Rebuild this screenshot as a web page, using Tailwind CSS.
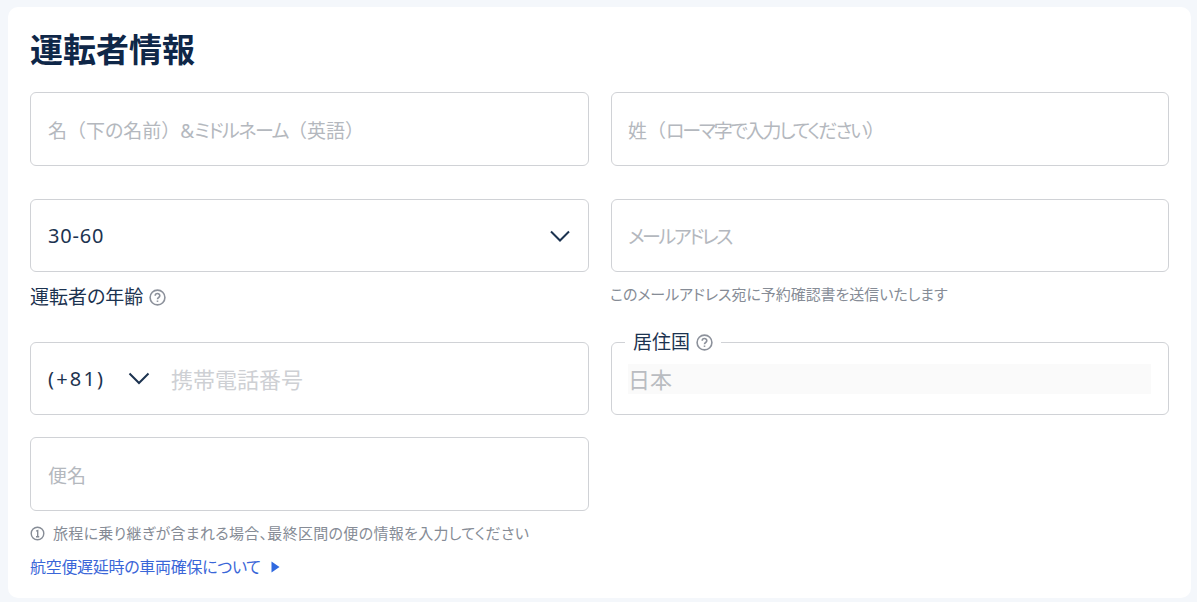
<!DOCTYPE html>
<html lang="ja">
<head>
    <meta charset="UTF-8">
    <title>運転者情報</title>
    <script src="https://cdn.jsdelivr.net/npm/@tailwindcss/browser@4"></script>
</head>
<body class="bg-[#f4f7fb] h-[602px] overflow-hidden font-['Noto_Sans','Noto_Sans_CJK_JP',sans-serif] [font-feature-settings:'palt']">
    <div class="mx-[8px] mt-[7px] mr-[6px] h-[591px] bg-white rounded-[10px] pl-[22px] pr-[22px]">
        <h1 class="h-[85px] pt-[20px] text-[33px] leading-[46px] font-bold text-[#0f2748]">運転者情報</h1>

        <!-- row 1 -->
        <div class="grid grid-cols-[559px_558px] gap-x-[22px]">
            <div class="h-[74px] border border-[#d0d2d6] rounded-[6px] flex items-center px-[17px] pt-[4px] text-[19px] text-[#b4b8be]">
                <span class="whitespace-pre"><span class="[font-feature-settings:normal]">名（</span>下の名前<span class="[font-feature-settings:normal]">）</span>&amp;<span class="tracking-[-1.5px]">ミドルネーム</span><span class="[font-feature-settings:normal]">（</span>英語<span class="[font-feature-settings:normal]">）</span></span>
            </div>
            <div class="h-[74px] border border-[#d0d2d6] rounded-[6px] flex items-center px-[16px] pt-[4px] text-[19px] text-[#b4b8be]">
                <span class="whitespace-pre"><span class="[font-feature-settings:normal]">姓（</span><span class="tracking-[-2.2px]">ローマ字で入力してください</span><span class="[font-feature-settings:normal]">）</span></span>
            </div>
        </div>

        <!-- row 2 -->
        <div class="grid grid-cols-[559px_558px] gap-x-[22px] mt-[33px]">
            <div>
                <div class="h-[73px] border border-[#d0d2d6] rounded-[6px] flex items-center justify-between pl-[17px] pr-[18px] text-[20px] tracking-[0.8px] text-[#1c3350]">
                    <span>30-60</span>
                    <svg width="20" height="12" viewBox="0 0 20 12" fill="none" stroke="#1c3350" stroke-width="2"><path d="M1 1.5l9 9 9-9"/></svg>
                </div>
                <div class="flex items-center gap-[6px] mt-[12px] h-[26px] text-[19px] text-[#1c3350]">
                    <span>運転者の年齢</span>
                    <svg width="17" height="17" viewBox="0 0 17 17" fill="none" stroke="#8c919b" stroke-width="1.6"><circle cx="8.5" cy="8.5" r="7.4"/><path d="M6.2 6.8c0-3 4.6-3 4.6-.1 0 1.800-2.300 1.800-2.300 3.500"/><path d="M8.500 11.500v1.400"/></svg>
                </div>
            </div>
            <div>
                <div class="h-[73px] border border-[#d0d2d6] rounded-[6px] flex items-center px-[16px] pt-[4px] text-[19px] tracking-[-2.4px] text-[#b4b8be]">メールアドレス</div>
                <div class="mt-[11px] -ml-[1px] h-[22px] leading-[22px] text-[15px] tracking-[-0.05px] text-[#868c96]">このメールアドレス宛に予約確認書を送信いたします</div>
            </div>
        </div>

        <!-- row 3 -->
        <div class="grid grid-cols-[559px_558px] gap-x-[22px] mt-[32px]">
            <div class="h-[73px] border border-[#d0d2d6] rounded-[6px] flex items-center pl-[17px] text-[20px]">
                <span class="text-[#1c3350] w-[80px] pt-[1px] tracking-[2.2px]">(+81)</span>
                <svg width="22" height="13" viewBox="0 0 22 13" fill="none" stroke="#1c3350" stroke-width="2"><path d="M1.500 1.500l9.500 9.500 9.500-9.500"/></svg>
                <span class="ml-[21px] pt-[2px] text-[22px] text-[#ced0d4]">携帯電話番号</span>
            </div>
            <div class="relative h-[73px] border border-[#d0d2d6] rounded-[6px] flex items-center pl-[16px] pr-[17px]">
                <div class="absolute left-[13px] -top-[13px] bg-white px-[8px] flex items-center gap-[6px] h-[24px] text-[19px] text-[#1c3350]">
                    <span>居住国</span>
                    <svg width="17" height="17" viewBox="0 0 17 17" fill="none" stroke="#8c919b" stroke-width="1.6"><circle cx="8.5" cy="8.5" r="7.4"/><path d="M6.2 6.8c0-3 4.6-3 4.6-.1 0 1.800-2.300 1.800-2.300 3.500"/><path d="M8.500 11.500v1.400"/></svg>
                </div>
                <div class="w-full h-[30px] bg-[#fafafa] leading-[30px] text-[22px] text-[#b9bcc1]">日本</div>
            </div>
        </div>

        <!-- row 4 -->
        <div class="grid grid-cols-[559px_558px] gap-x-[22px] mt-[22px]">
            <div>
                <div class="h-[74px] border border-[#d0d2d6] rounded-[6px] flex items-center px-[17px] pt-[4px] text-[19px] text-[#b4b8be]">便名</div>
                <div class="flex items-center gap-[8px] mt-[11px] h-[22px] text-[15px] tracking-[0.3px] text-[#868c96]">
                    <svg width="15" height="15" viewBox="0 0 15 15" fill="none" stroke="#868c96" stroke-width="1.4"><circle cx="7.5" cy="7.5" r="6.300"/><path d="M6.200 5.200l1.500-.7v6M6 10.700h3.200"/></svg>
                    <span>旅程に乗り継ぎが含まれる場合、最終区間の便の情報を入力してください</span>
                </div>
                <div class="flex items-center gap-[10px] mt-[12px] h-[22px] text-[16px] tracking-[-0.3px] text-[#3a66d8]">
                    <span>航空便遅延時の車両確保について</span>
                    <svg width="9" height="12" viewBox="0 0 9 12" fill="#2f69e0"><path d="M0.500 0.500l8 5.500-8 5.500z"/></svg>
                </div>
            </div>
        </div>
    </div>
</body>
</html>
